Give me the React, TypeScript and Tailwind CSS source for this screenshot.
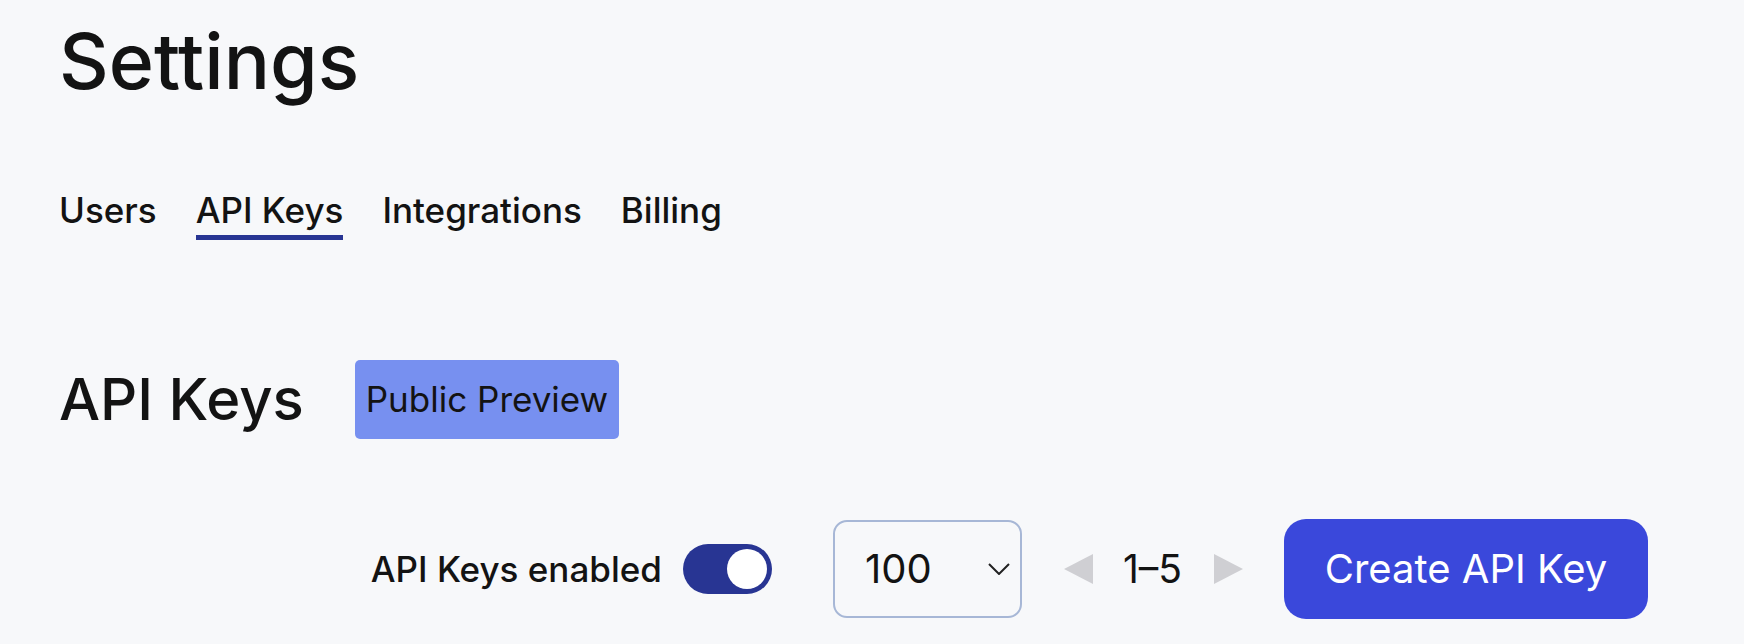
import React from "react";

export default function App() {
  return (
    <div className="min-h-screen w-full bg-[#f7f8fa] pl-[59px] pr-[96px] text-[#131313] [font-family:Inter,'Liberation_Sans',sans-serif]">
      <h1 className="pt-[21px] text-[77px] leading-[80px] font-medium">
        Settings
      </h1>

      <nav className="mt-[92px] flex gap-[39px] text-[35px] leading-[34px] font-medium">
        <div className="pb-[13px]">Users</div>
        <div className="border-b-[5px] border-[#283593] pb-[8px]">API Keys</div>
        <div className="pb-[13px]">Integrations</div>
        <div className="pb-[13px]">Billing</div>
      </nav>

      <div className="mt-[120px] flex items-center gap-[51px]">
        <h2 className="text-[58px] leading-[79px] font-medium">API Keys</h2>
        <div className="flex h-[79px] items-center rounded-[5px] bg-[#7790f0] px-[11px] text-[35px] font-normal">
          Public Preview
        </div>
      </div>

      <div className="mt-[80px] flex items-center justify-end">
        <span className="text-[35px] font-medium">API Keys enabled</span>
        <button
          className="ml-[21px] flex h-[50px] w-[89px] items-center justify-end rounded-full bg-[#283593] pr-[5px]"
          aria-label="toggle"
        >
          <span className="h-[40px] w-[40px] rounded-full bg-white" />
        </button>
        <div className="ml-[61px] flex h-[98px] w-[189px] items-center justify-between rounded-[14px] border-2 border-[#a7b7d6] pl-[30px] pr-[10px]">
          <span className="text-[40px]">100</span>
          <svg width="22" height="12" viewBox="0 0 22 12" fill="none">
            <path d="M1 1 L11 11 L21 1" stroke="#222" strokeWidth="2" />
          </svg>
        </div>
        <svg className="ml-[42px]" width="29" height="30" viewBox="0 0 29 30">
          <path d="M29 0 L29 30 L0 15 Z" fill="#cfcfd3" />
        </svg>
        <span className="ml-[30px] text-[39px]">1–5</span>
        <svg className="ml-[32px]" width="29" height="30" viewBox="0 0 29 30">
          <path d="M0 0 L0 30 L29 15 Z" fill="#cfcfd3" />
        </svg>
        <button className="ml-[41px] flex h-[100px] w-[364px] items-center justify-center rounded-[22px] bg-[#3a48db] text-[40px] text-white">
          Create API Key
        </button>
      </div>
    </div>
  );
}
